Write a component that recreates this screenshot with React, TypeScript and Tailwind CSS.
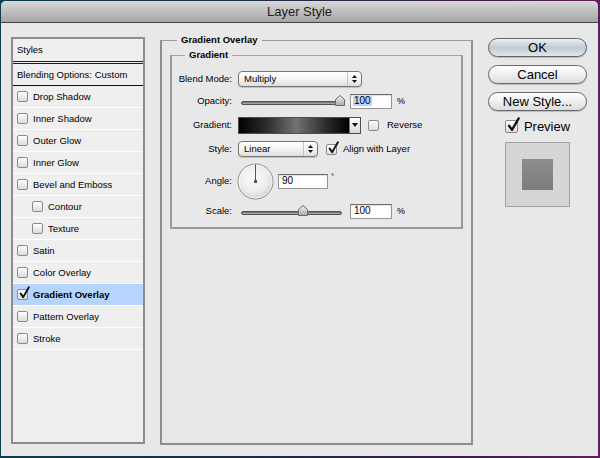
import React from 'react';

type CheckProps = { checked?: boolean; big?: boolean };

function Checkbox({ checked = false, big = false }: CheckProps) {
  return (
    <span
      className={`relative inline-block shrink-0 rounded-[2px] border border-[#8a8a8a] bg-gradient-to-b from-white to-[#dcdcdc] ${
        big ? 'h-[13px] w-[13px]' : 'h-[11px] w-[11px]'
      }`}
    >
      {checked && (
        <svg
          className="absolute -top-[3px] left-[1px] overflow-visible"
          width={big ? 13 : 11}
          height={big ? 14 : 12}
          viewBox="0 0 12 13"
        >
          <path
            d="M1.8 7.2 L4.6 11 L10.8 0.3"
            fill="none"
            stroke="#111"
            strokeWidth="2.1"
            strokeLinecap="round"
            strokeLinejoin="round"
          />
        </svg>
      )}
    </span>
  );
}

const styleRows = [
  { label: 'Drop Shadow' },
  { label: 'Inner Shadow' },
  { label: 'Outer Glow' },
  { label: 'Inner Glow' },
  { label: 'Bevel and Emboss' },
  { label: 'Contour', indent: true },
  { label: 'Texture', indent: true },
  { label: 'Satin' },
  { label: 'Color Overlay' },
  { label: 'Gradient Overlay', checked: true, active: true },
  { label: 'Pattern Overlay' },
  { label: 'Stroke' },
];

function StylesList() {
  return (
    <div className="mt-[3px] h-[407px] w-[134px] shrink-0 border-2 border-[#8c8c8c] bg-[#efefef] text-[9.5px] leading-none">
      <div className="flex h-[25px] items-center border-b-[3px] border-double border-[#1e1e1e] pl-[4px]">Styles</div>
      <div className="flex h-[22px] items-center border-b border-[#111] pl-[4px]">Blending Options: Custom</div>
      {styleRows.map((r) => (
        <div
          key={r.label}
          className={`flex h-[22px] items-center gap-[5px] border-b border-white ${r.indent ? 'pl-[19px]' : 'pl-[4px]'} ${
            r.active ? 'bg-[#b5d5fe] font-bold' : ''
          }`}
        >
          <Checkbox checked={r.checked} />
          <span>{r.label}</span>
        </div>
      ))}
    </div>
  );
}

function Stepper() {
  return (
    <span className="flex h-full w-[14px] flex-col items-center justify-center gap-[2px] border-l border-[#c4c4c4]">
      <svg width="5" height="3" viewBox="0 0 5 3">
        <path d="M0 3 L2.5 0 L5 3 Z" fill="#111" />
      </svg>
      <svg width="5" height="3" viewBox="0 0 5 3">
        <path d="M0 0 L5 0 L2.5 3 Z" fill="#111" />
      </svg>
    </span>
  );
}

function Select({ value, wide }: { value: string; wide?: boolean }) {
  return (
    <div
      className={`flex h-[16px] items-center rounded-[4px] border border-[#767676] bg-gradient-to-b from-white via-[#f3f3f3] to-[#dedede] shadow-[0_1px_1px_rgba(0,0,0,0.18)] ${
        wide ? 'w-[124px]' : 'w-[80px]'
      }`}
    >
      <span className="flex-1 pl-[5px] text-[9.5px] leading-none">{value}</span>
      <Stepper />
    </div>
  );
}

function Slider({ thumb }: { thumb: string }) {
  return (
    <div className="relative ml-[3px] h-[12px] w-[101px]">
      <div className="absolute inset-x-0 top-[6px] h-[4px] rounded-full border border-[#555] bg-gradient-to-b from-[#666] to-[#b8b8b8]" />
      <svg className={`absolute top-0 ${thumb}`} width="10" height="11" viewBox="0 0 10 11">
        <defs>
          <linearGradient id="thumbg" x1="0" y1="0" x2="0" y2="1">
            <stop offset="0" stopColor="#f4f4f4" />
            <stop offset="1" stopColor="#a9a9a9" />
          </linearGradient>
        </defs>
        <path d="M0.5 4.5 L5 0.5 L9.5 4.5 L9.5 10.5 L0.5 10.5 Z" fill="url(#thumbg)" stroke="#6a6a6a" strokeWidth="1" />
      </svg>
    </div>
  );
}

function NumField({ value, width, selected }: { value: string; width: string; selected?: boolean }) {
  return (
    <div
      className={`flex h-[15px] items-center border border-[#939393] border-t-[#6a6a6a] bg-white pl-[2px] text-[10px] leading-none shadow-[inset_0_1px_1px_rgba(0,0,0,0.12)] ${width}`}
    >
      <span className={selected ? 'bg-[#b5d5fe] px-px' : 'px-px'}>{value}</span>
    </div>
  );
}

function Label({ children }: { children: React.ReactNode }) {
  return <span className="w-[60px] shrink-0 pr-0 text-right text-[9.5px] leading-none">{children}</span>;
}

function AngleDial() {
  return (
    <svg className="ml-[-1px]" width="37" height="37" viewBox="0 0 37 37">
      <defs>
        <radialGradient id="dialg" cx="0.45" cy="0.4" r="0.6">
          <stop offset="0" stopColor="#fbfbfb" />
          <stop offset="0.7" stopColor="#ebebeb" />
          <stop offset="1" stopColor="#d2d2d2" />
        </radialGradient>
      </defs>
      <circle cx="18.5" cy="18.5" r="17.5" fill="url(#dialg)" stroke="#8a8a8a" strokeWidth="1" />
      <circle cx="18.5" cy="18.5" r="16.5" fill="none" stroke="#ffffff" strokeOpacity="0.7" strokeWidth="1" />
      <line x1="18.5" y1="1.5" x2="18.5" y2="18" stroke="#555" strokeWidth="1" />
      <rect x="17" y="17" width="3" height="3" fill="#555" />
    </svg>
  );
}

function GradientSwatch() {
  return (
    <div className="flex h-[17px] w-[123px] border border-[#4d4d4d]">
      <div className="flex-1 bg-[linear-gradient(to_right,#000_0%,#2c2c2c_25%,#727272_52%,#2a2a2a_80%,#000_100%)]" />
      <div className="flex w-[11px] items-center justify-center border-l border-[#7a7a7a] bg-gradient-to-b from-white to-[#d8d8d8]">
        <svg width="6" height="4" viewBox="0 0 6 4">
          <path d="M0 0 L6 0 L3 4 Z" fill="#111" />
        </svg>
      </div>
    </div>
  );
}

function OverlayPanel() {
  return (
    <fieldset className="ml-[15px] h-[411px] w-[313px] shrink-0 border-2 border-t border-[#8e8e8e] border-t-[#9c9c9c] px-[8px]">
      <legend className="ml-[7px] px-[4px] text-[9.5px] font-bold leading-[12px]">Gradient Overlay</legend>
      <fieldset className="mt-[3px] h-[180px] border-2 border-t border-[#9a9a9a] border-t-[#a4a4a4]">
        <legend className="ml-[13px] px-[4px] text-[9.5px] font-bold leading-[12px]">Gradient</legend>
        <div className="flex flex-col">
          <div className="mt-[10px] flex h-[16px] items-center">
            <Label>Blend Mode:</Label>
            <div className="ml-[6px]">
              <Select value="Multiply" wide />
            </div>
          </div>
          <div className="mt-[6px] flex h-[16px] items-center">
            <Label>Opacity:</Label>
            <div className="ml-[6px] flex items-center">
              <Slider thumb="left-[94px]" />
              <div className="ml-[8px]">
                <NumField value="100" width="w-[42px]" selected />
              </div>
              <span className="ml-[5px] text-[9px] leading-none">%</span>
            </div>
          </div>
          <div className="mt-[8px] flex h-[16px] items-center">
            <Label>Gradient:</Label>
            <div className="ml-[6px] flex items-center">
              <GradientSwatch />
              <span className="ml-[7px] flex items-center gap-[8px] text-[9.5px] leading-none">
                <Checkbox />
                Reverse
              </span>
            </div>
          </div>
          <div className="mt-[8px] flex h-[16px] items-center">
            <Label>Style:</Label>
            <div className="ml-[6px] flex items-center">
              <Select value="Linear" />
              <span className="ml-[8px] flex items-center gap-[6px] text-[9.5px] leading-none">
                <Checkbox checked />
                Align with Layer
              </span>
            </div>
          </div>
          <div className="mt-[6px] flex h-[36px] items-center">
            <Label>Angle:</Label>
            <div className="ml-[6px] flex items-center">
              <AngleDial />
              <div className="ml-[4px]">
                <NumField value="90" width="w-[50px]" />
              </div>
              <span className="ml-[3px] -mt-[8px] text-[8px] leading-none">°</span>
            </div>
          </div>
          <div className="mt-[4px] flex h-[16px] items-center">
            <Label>Scale:</Label>
            <div className="ml-[6px] flex items-center">
              <Slider thumb="left-[57px]" />
              <div className="ml-[8px]">
                <NumField value="100" width="w-[42px]" />
              </div>
              <span className="ml-[5px] text-[9px] leading-none">%</span>
            </div>
          </div>
        </div>
      </fieldset>
    </fieldset>
  );
}

function ActionColumn() {
  const btn =
    'flex h-[19px] w-[99px] items-center justify-center rounded-full border text-[13px] leading-none text-black shadow-[0_1px_1px_rgba(0,0,0,0.2)]';
  return (
    <div className="ml-[15px] mt-[4px] flex w-[99px] shrink-0 flex-col items-center">
      <button className={`${btn} border-[#5d636c] bg-gradient-to-b from-[#eef1f4] via-[#c2cad2] to-[#e2e7ec]`}>OK</button>
      <button className={`${btn} mt-[8px] border-[#6a6a6a] bg-gradient-to-b from-white via-[#efefef] to-[#dcdcdc]`}>
        Cancel
      </button>
      <button className={`${btn} mt-[8px] border-[#6a6a6a] bg-gradient-to-b from-white via-[#efefef] to-[#dcdcdc]`}>
        New Style...
      </button>
      <div className="mt-[7px] flex h-[16px] items-center gap-[6px] text-[13px] leading-none">
        <Checkbox checked big />
        <span>Preview</span>
      </div>
      <div className="mt-[8px] flex h-[65px] w-[65px] items-center justify-center border border-[#a2a2a2] bg-[#d6d6d6]">
        <div className="h-[31px] w-[31px] bg-gradient-to-b from-[#8e8e8e] to-[#7c7c7c]" />
      </div>
    </div>
  );
}

export default function App() {
  return (
    <div className="h-[458px] w-[600px] overflow-hidden bg-[linear-gradient(90deg,#0d3c4a_0%,#1d2a48_45%,#3a1d4c_75%,#5e1f5c_100%)] pl-px pt-px font-['Liberation_Sans',Arial,sans-serif] text-black">
      <div className="flex h-[455px] w-[597px] flex-col overflow-hidden rounded-t-[5px] bg-[#e8e8e8]">
        <div className="flex h-[22px] shrink-0 items-center justify-center border-b border-[#444] bg-gradient-to-b from-[#d8d8d8] to-[#a6a6a6] text-[13px] leading-none text-[#1c1c1c]">
          Layer Style
        </div>
        <div className="flex flex-1 items-start pl-[10px] pt-[11px]">
          <StylesList />
          <OverlayPanel />
          <ActionColumn />
        </div>
      </div>
    </div>
  );
}
